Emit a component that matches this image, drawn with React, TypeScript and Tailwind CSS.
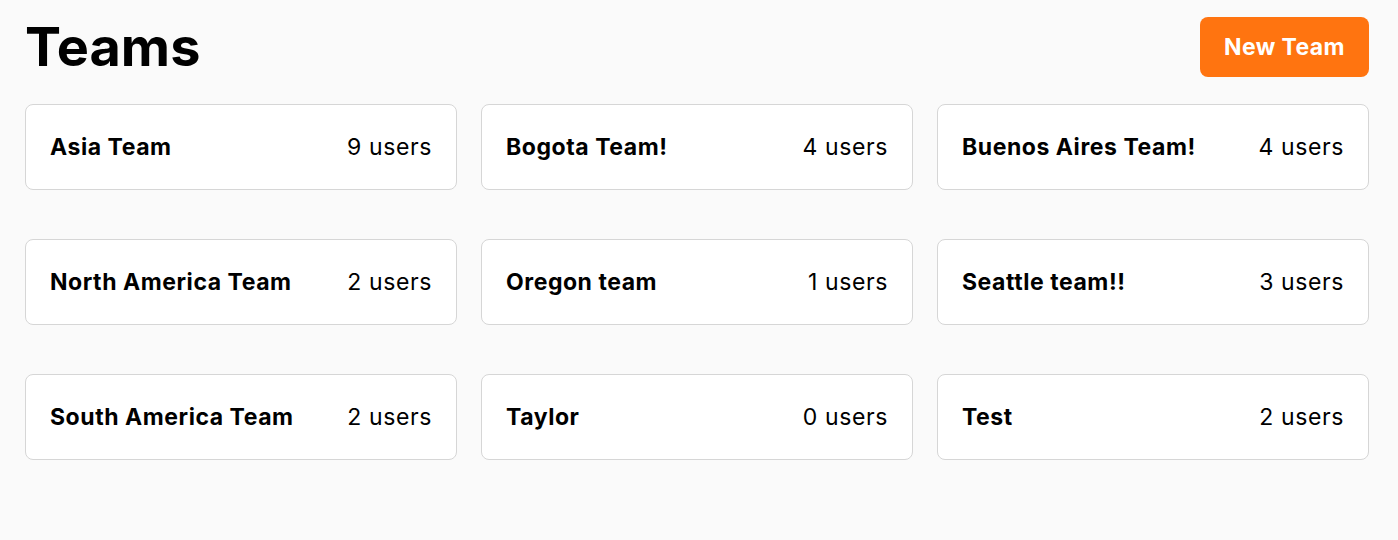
import React from "react";

const teams = [
  { name: "Asia Team", users: 9 },
  { name: "Bogota Team!", users: 4 },
  { name: "Buenos Aires Team!", users: 4 },
  { name: "North America Team", users: 2 },
  { name: "Oregon team", users: 1 },
  { name: "Seattle team!!", users: 3 },
  { name: "South America Team", users: 2 },
  { name: "Taylor", users: 0 },
  { name: "Test", users: 2 },
];

const App = () => {
  return (
    <div className="min-h-screen bg-[#fafafa] pl-[25px] pr-[29px] pt-[17px] font-['Inter',sans-serif] text-black">
      {/* Header */}
      <div className="flex h-[60px] items-center justify-between">
        <h1 className="text-[54px] font-bold leading-none">Teams</h1>
        <button className="h-[60px] w-[169px] rounded-lg bg-[#ff7410] text-[23px] font-bold tracking-[0.4px] text-white">
          New Team
        </button>
      </div>

      {/* Team cards */}
      <div className="mt-[27px] grid grid-cols-3 gap-x-6 gap-y-[49px]">
        {teams.map((t) => (
          <div
            key={t.name}
            className="flex h-[86px] items-center justify-between rounded-lg border border-[#d6d6d6] bg-white px-6"
          >
            <span className="text-[23px] font-bold tracking-[0.55px]">{t.name}</span>
            <span className="text-[23px] tracking-[0.6px]">{t.users} users</span>
          </div>
        ))}
      </div>
    </div>
  );
};

export default App;
